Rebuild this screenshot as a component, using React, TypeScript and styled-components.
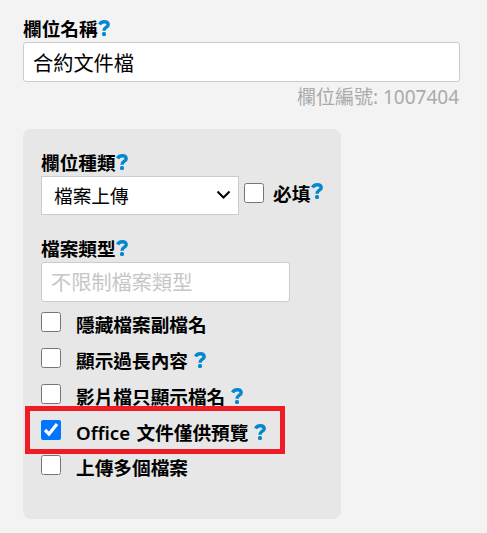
import React from "react";
import styled, { createGlobalStyle } from "styled-components";

const GlobalStyle = createGlobalStyle`
  *, *::before, *::after { box-sizing: border-box; }
  body {
    margin: 0;
    background: #f3f3f3;
    color: #000;
    font-family: "Noto Sans", "Noto Sans CJK TC", sans-serif;
    font-size: 18.67px;
  }
`;

const Page = styled.main`
  width: 487px;
  height: 533px;
  padding: 14px 27px 0 23px;
  background: #f3f3f3;
  overflow: hidden;
`;

const Label = styled.div`
  display: flex;
  align-items: flex-start;
  height: 28px;
  line-height: 30px;
  font-weight: 600;
  white-space: nowrap;
`;

const HelpIcon = styled.svg<{ $top?: number; $gap?: number }>`
  flex: none;
  display: block;
  width: 12px;
  height: 16px;
  margin: ${(p) => p.$top ?? 6}px 0 0 ${(p) => p.$gap ?? 0.5}px;
`;

const TextInput = styled.input<{ $width: number }>`
  display: block;
  width: ${(p) => p.$width}px;
  height: 40px;
  margin: 0;
  padding: 0 9px;
  border: 1px solid #ccc;
  border-radius: 3px;
  background: #fff;
  color: #000;
  font: 400 20.2px "Noto Sans", "Noto Sans CJK TC", sans-serif;
  outline: none;
  &::placeholder { color: #c6c6c6; opacity: 1; }
`;

const FieldNumber = styled.div`
  height: 47px;
  padding-right: 1px;
  font-size: 19px;
  line-height: 30px;
  text-align: right;
  color: #aaa;
`;

const Panel = styled.section`
  width: 318px;
  height: 390px;
  padding: 19px 18px 0;
  border-radius: 8px;
  background: #e7e7e7;
`;

const TypeRow = styled.div`
  display: flex;
  align-items: flex-start;
  height: 58px;
`;

const SelectBox = styled.button`
  display: flex;
  align-items: center;
  justify-content: space-between;
  flex: none;
  width: 198px;
  height: 39px;
  padding: 0 7px 2px 12px;
  border: 1px solid #ccc;
  background: #fff;
  color: #000;
  font: 400 18.67px "Noto Sans", "Noto Sans CJK TC", sans-serif;
`;

const Chevron = styled.svg`
  display: block;
  width: 15px;
  height: 10px;
  margin-top: 1px;
`;

const Checkbox = styled.input.attrs({ type: "checkbox" })`
  flex: none;
  width: 20px;
  height: 20px;
  margin: 0;
`;

const Required = styled.label`
  display: flex;
  flex: none;
  align-items: flex-start;
  margin: 7px 0 0 5px;
`;

const RequiredText = styled.span`
  margin-left: 9px;
  line-height: 22px;
  font-weight: 600;
  white-space: nowrap;
`;

const Options = styled.div`
  display: flex;
  flex-direction: column;
  padding-top: 10px;
`;

const Option = styled.label`
  position: relative;
  display: flex;
  align-items: flex-start;
  height: 35.85px;
`;

const OptionText = styled.span`
  margin-left: 15px;
  line-height: 26px;
  font-weight: 600;
  word-spacing: 1.5px;
  white-space: nowrap;
`;

const Highlight = styled.span`
  position: absolute;
  left: -16px;
  top: -14px;
  width: 260px;
  height: 48px;
  border: 5px solid #ee1c25;
  pointer-events: none;
`;

function Help({ top, gap }: { top?: number; gap?: number }) {
  return (
    <HelpIcon $top={top} $gap={gap} viewBox="0 0 12 16" aria-hidden>
      <path
        d="M1.6 4.5C2.4 2.5 4 1.7 6.2 1.7C8.7 1.7 10.2 2.8 10.2 4.7C10.2 7.3 6 7.1 6 10.7"
        fill="none"
        stroke="#0288d1"
        strokeWidth="3.4"
      />
      <rect x="4" y="12" width="4" height="4" rx="1.5" fill="#0288d1" />
    </HelpIcon>
  );
}

const options = [
  { text: "隱藏檔案副檔名" },
  { text: "顯示過長內容", help: true },
  { text: "影片檔只顯示檔名", help: true },
  { text: "Office 文件僅供預覽", help: true, checked: true, highlighted: true },
  { text: "上傳多個檔案" },
];

export default function App() {
  return (
    <>
      <GlobalStyle />
      <Page>
        <Label>欄位名稱<Help /></Label>
        <TextInput $width={437} defaultValue="合約文件檔" />
        <FieldNumber>欄位編號: 1007404</FieldNumber>
        <Panel>
          <Label>欄位種類<Help /></Label>
          <TypeRow>
            <SelectBox type="button">
              檔案上傳
              <Chevron viewBox="0 0 15 10">
                <path d="M1.5 1.5L7.5 7.5L13.5 1.5" fill="none" stroke="#000" strokeWidth="2" />
              </Chevron>
            </SelectBox>
            <Required>
              <Checkbox />
              <RequiredText>必填</RequiredText>
              <Help top={0} />
            </Required>
          </TypeRow>
          <Label>檔案類型<Help /></Label>
          <TextInput $width={249} placeholder="不限制檔案類型" />
          <Options>
            {options.map((o) => (
              <Option key={o.text}>
                <Checkbox defaultChecked={o.checked} />
                <OptionText>{o.text}</OptionText>
                {o.help && <Help top={4} gap={6} />}
                {o.highlighted && <Highlight />}
              </Option>
            ))}
          </Options>
        </Panel>
      </Page>
    </>
  );
}
